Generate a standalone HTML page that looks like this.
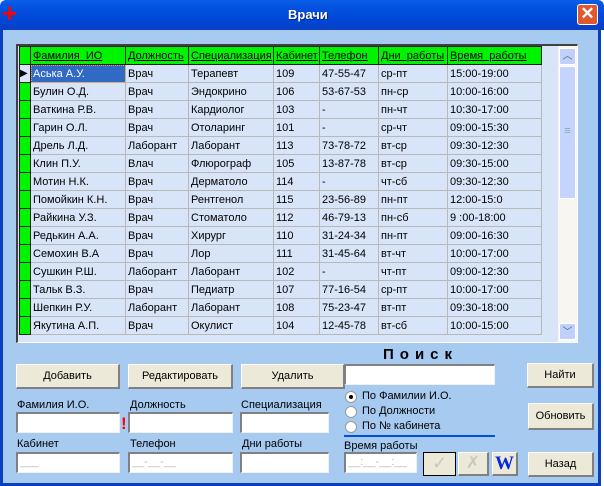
<!DOCTYPE html>
<html><head><meta charset="utf-8"><style>
*{box-sizing:border-box;margin:0;padding:0}
body{width:604px;height:486px;overflow:hidden;background:#fff;font-family:"Liberation Sans",sans-serif;font-size:11px;position:relative}
.a{position:absolute}
#title{left:0;top:0;width:604px;height:30px;background:linear-gradient(#0a5ee8,#0453e0 20%,#0046d6 70%,#0a3fc0);border-radius:6px 6px 0 0}
#body{left:0;top:30px;width:601px;height:456px;background:#a6caf0;border-left:3px solid #0a3fc0;border-right:3px solid #0a3fc0;border-bottom:3px solid #0a3fc0}
#grid{left:16px;top:44px;width:562px;height:299px;background:#d8e4f8;border-left:2px solid #404040;border-top:2px solid #404040;border-right:1px solid #fff;border-bottom:1px solid #fff;overflow:hidden}
table{border-collapse:collapse;position:absolute;left:1px;top:0;table-layout:fixed;width:522px}
td{height:18px;border:1px solid #b8b8b8;padding:0 2px;white-space:nowrap;overflow:hidden;font-size:11px;color:#000}
tr.h td{background:#00f400;text-decoration:underline;border:1px solid #202020;height:18px}
td.i{background:#00f400;border:1px solid #202020;padding:0}
.btn{position:absolute;background:#ece9d8;border:1px solid #fff;border-right:2px solid #808080;border-bottom:2px solid #808080;text-align:center;font-size:11px}
.inp{position:absolute;background:#fff;border:2px solid #808080;border-right:1px solid #f0f0f0;border-bottom:1px solid #f0f0f0;height:21px;color:#bbb;font-size:11px;padding-left:2px;line-height:17px}
.lbl{position:absolute;font-size:11px}
.rad{position:absolute;width:12px;height:12px;border-radius:50%;background:#fff;border:1px solid #999}
</style></head><body>
<div id="title" class="a"></div>
<div class="a" style="left:2px;top:3px;color:#f00;font-size:26px;font-weight:bold;line-height:20px">+</div>
<div class="a" style="left:288px;top:7px;color:#fff;font-weight:bold;font-size:13px;text-shadow:1px 1px #0a2a80">Врачи</div>
<div class="a" style="left:577px;top:4px;width:21px;height:21px;background:#e0582e;border:1px solid #fff;border-radius:3px;color:#fff;text-align:center;font-size:17px;line-height:18px;font-weight:bold">✕</div>
<div id="body" class="a"></div>
<div id="grid" class="a">
<table>
<colgroup><col style="width:11px"><col style="width:95px"><col style="width:63px"><col style="width:85px"><col style="width:46px"><col style="width:59px"><col style="width:69px"><col style="width:94px"></colgroup>
<tr class="h"><td class="i"></td><td>Фамилия&nbsp; ИО</td><td>Должность</td><td>Специализация</td><td>Кабинет</td><td>Телефон</td><td>Дни&nbsp; работы</td><td>Время&nbsp; работы</td></tr>
<tr><td class="i" style="background:#d8e4f8;font-size:10px">▶</td><td style="background:#316ac5;color:#fff;outline:1px dotted #f0a040;outline-offset:-1px">Аська А.У.</td><td>Врач</td><td>Терапевт</td><td>109</td><td>47-55-47</td><td>ср-пт</td><td>15:00-19:00</td></tr>
<tr><td class="i"></td><td>Булин О.Д.</td><td>Врач</td><td>Эндокрино</td><td>106</td><td>53-67-53</td><td>пн-ср</td><td>10:00-16:00</td></tr>
<tr><td class="i"></td><td>Ваткина Р.В.</td><td>Врач</td><td>Кардиолог</td><td>103</td><td>-</td><td>пн-чт</td><td>10:30-17:00</td></tr>
<tr><td class="i"></td><td>Гарин О.Л.</td><td>Врач</td><td>Отоларинг</td><td>101</td><td>-</td><td>ср-чт</td><td>09:00-15:30</td></tr>
<tr><td class="i"></td><td>Дрель Л.Д.</td><td>Лаборант</td><td>Лаборант</td><td>113</td><td>73-78-72</td><td>вт-ср</td><td>09:30-12:30</td></tr>
<tr><td class="i"></td><td>Клин П.У.</td><td>Влач</td><td>Флюрограф</td><td>105</td><td>13-87-78</td><td>вт-ср</td><td>09:30-15:00</td></tr>
<tr><td class="i"></td><td>Мотин Н.К.</td><td>Врач</td><td>Дерматоло</td><td>114</td><td>-</td><td>чт-сб</td><td>09:30-12:30</td></tr>
<tr><td class="i"></td><td>Помойкин К.Н.</td><td>Врач</td><td>Рентгенол</td><td>115</td><td>23-56-89</td><td>пн-пт</td><td>12:00-15:0</td></tr>
<tr><td class="i"></td><td>Райкина У.З.</td><td>Врач</td><td>Стоматоло</td><td>112</td><td>46-79-13</td><td>пн-сб</td><td>9 :00-18:00</td></tr>
<tr><td class="i"></td><td>Редькин А.А.</td><td>Врач</td><td>Хирург</td><td>110</td><td>31-24-34</td><td>пн-пт</td><td>09:00-16:30</td></tr>
<tr><td class="i"></td><td>Семохин В.А</td><td>Врач</td><td>Лор</td><td>111</td><td>31-45-64</td><td>вт-чт</td><td>10:00-17:00</td></tr>
<tr><td class="i"></td><td>Сушкин Р.Ш.</td><td>Лаборант</td><td>Лаборант</td><td>102</td><td>-</td><td>чт-пт</td><td>09:00-12:30</td></tr>
<tr><td class="i"></td><td>Тальк В.З.</td><td>Врач</td><td>Педиатр</td><td>107</td><td>77-16-54</td><td>ср-пт</td><td>10:00-17:00</td></tr>
<tr><td class="i"></td><td>Шепкин Р.У.</td><td>Лаборант</td><td>Лаборант</td><td>108</td><td>75-23-47</td><td>вт-пт</td><td>09:30-18:00</td></tr>
<tr><td class="i"></td><td>Якутина А.П.</td><td>Врач</td><td>Окулист</td><td>104</td><td>12-45-78</td><td>вт-сб</td><td>10:00-15:00</td></tr>
</table>
<div class="a" style="left:540px;top:0;width:19px;height:296px;background:#f7f6f0"></div>
<div class="a" style="left:541px;top:2px;width:17px;height:17px;background:#c0d0f8;border:1px solid #fff;border-radius:2px;color:#4d6185;text-align:center;font-size:10px;line-height:15px">︿</div>
<div class="a" style="left:541px;top:20px;width:17px;height:133px;background:#c4d4fc;border:1px solid #fff;border-radius:2px;color:#8aa;text-align:center;line-height:128px">≡</div>
<div class="a" style="left:541px;top:277px;width:17px;height:17px;background:#c0d0f8;border:1px solid #fff;border-radius:2px;color:#4d6185;text-align:center;font-size:10px;line-height:17px">﹀</div>
</div>
<div class="btn" style="left:16px;top:364px;width:104px;height:25px;line-height:22px">Добавить</div>
<div class="btn" style="left:128px;top:364px;width:105px;height:25px;line-height:22px">Редактировать</div>
<div class="btn" style="left:241px;top:364px;width:104px;height:25px;line-height:22px">Удалить</div>
<div class="lbl" style="left:17px;top:399px">Фамилия И.О.</div>
<div class="lbl" style="left:130px;top:399px">Должность</div>
<div class="lbl" style="left:241px;top:399px">Специализация</div>
<div class="inp" style="left:16px;top:412px;width:104px"></div>
<div class="a" style="left:121px;top:414px;color:#f00;font-weight:bold;font-size:17px">!</div>
<div class="inp" style="left:128px;top:412px;width:105px"></div>
<div class="inp" style="left:240px;top:412px;width:89px"></div>
<div class="lbl" style="left:17px;top:438px">Кабинет</div>
<div class="lbl" style="left:130px;top:438px">Телефон</div>
<div class="lbl" style="left:242px;top:438px">Дни работы</div>
<div class="inp" style="left:16px;top:452px;width:104px">___</div>
<div class="inp" style="left:128px;top:452px;width:105px">__-__-__</div>
<div class="inp" style="left:240px;top:452px;width:89px"></div>
<div class="a" style="left:383px;top:346px;font-weight:bold;font-size:15px;letter-spacing:6px">Поиск</div>
<div class="inp" style="left:344px;top:364px;width:151px"></div>
<div class="rad" style="left:345px;top:391px"><div style="width:4px;height:4px;background:#000;border-radius:50%;margin:3px"></div></div>
<div class="rad" style="left:345px;top:406px"></div>
<div class="rad" style="left:345px;top:421px"></div>
<div class="lbl" style="left:362px;top:390px">По Фамилии И.О.</div>
<div class="lbl" style="left:362px;top:405px">По Должности</div>
<div class="lbl" style="left:362px;top:420px">По № кабинета</div>
<div class="a" style="left:344px;top:435px;width:151px;height:2px;background:#0050e0"></div>
<div class="lbl" style="left:344px;top:440px">Время работы</div>
<div class="inp" style="left:344px;top:452px;width:73px">__:__-__:__</div>
<div class="btn" style="left:423px;top:452px;width:33px;height:24px;border:1px solid #000;color:#c8c8c0;font-size:18px;line-height:20px">✓</div>
<div class="btn" style="left:458px;top:452px;width:31px;height:24px;color:#c8c8c0;font-size:17px;line-height:20px">✗</div>
<div class="btn" style="left:492px;top:452px;width:26px;height:24px;color:#0028e0;font-family:'Liberation Serif',serif;font-weight:bold;font-size:19px;line-height:21px">W</div>
<div class="btn" style="left:527px;top:363px;width:67px;height:25px;line-height:22px">Найти</div>
<div class="btn" style="left:528px;top:403px;width:66px;height:27px;line-height:24px">Обновить</div>
<div class="btn" style="left:528px;top:452px;width:66px;height:25px;line-height:22px">Назад</div>
</body></html>
